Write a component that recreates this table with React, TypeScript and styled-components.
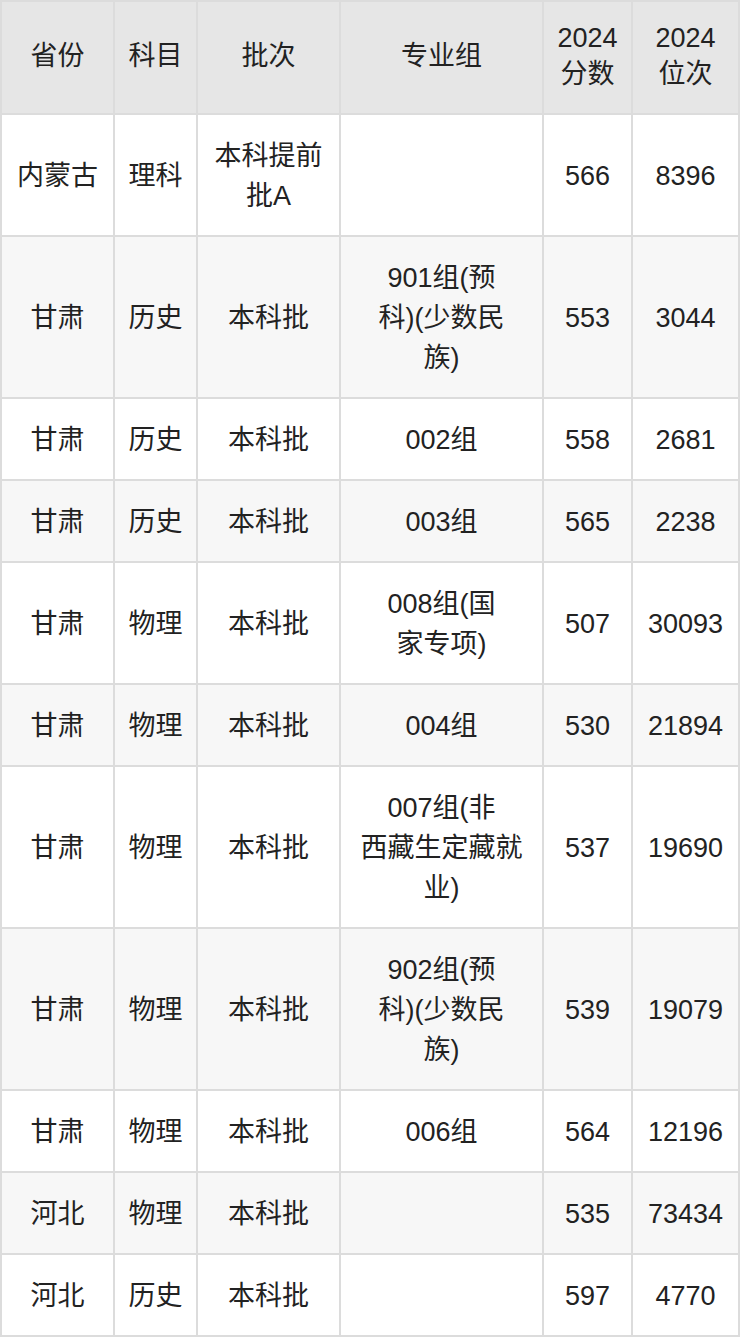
import React from "react";
import styled, { createGlobalStyle } from "styled-components";

const GlobalStyle = createGlobalStyle`
  html, body {
    margin: 0;
    padding: 0;
    background: #ffffff;
  }
  body {
    font-family: "Liberation Sans", "Noto Sans CJK SC", sans-serif;
    color: #222222;
  }
`;

const Table = styled.table`
  width: 740px;
  border-collapse: separate;
  border-spacing: 0;
  table-layout: fixed;
  border-top: 2px solid #dcdcdc;
  border-left: 2px solid #dcdcdc;
  font-size: 27px;
`;

const HeadCell = styled.th<{ $w: number }>`
  box-sizing: border-box;
  width: ${(p) => p.$w}px;
  background: #e6e6e6;
  font-weight: 400;
  line-height: 36px;
  padding: 18px 4px 21px;
  text-align: center;
  vertical-align: middle;
  border-right: 2px solid #dcdcdc;
  border-bottom: 2px solid #dcdcdc;
  white-space: pre-line;
`;

const Row = styled.tr<{ $striped: boolean }>`
  background: ${(p) => (p.$striped ? "#f7f7f7" : "#ffffff")};
`;

const Cell = styled.td`
  box-sizing: border-box;
  line-height: 40px;
  padding: 21px 4px 19px;
  text-align: center;
  vertical-align: middle;
  border-right: 2px solid #dcdcdc;
  border-bottom: 2px solid #dcdcdc;
  white-space: pre-line;
`;

const columns = [
  { label: "省份", w: 113 },
  { label: "科目", w: 83 },
  { label: "批次", w: 143 },
  { label: "专业组", w: 203 },
  { label: "2024\n分数", w: 89 },
  { label: "2024\n位次", w: 107 },
];

const rows: string[][] = [
  ["内蒙古", "理科", "本科提前\n批A", "", "566", "8396"],
  ["甘肃", "历史", "本科批", "901组(预\n科)(少数民\n族)", "553", "3044"],
  ["甘肃", "历史", "本科批", "002组", "558", "2681"],
  ["甘肃", "历史", "本科批", "003组", "565", "2238"],
  ["甘肃", "物理", "本科批", "008组(国\n家专项)", "507", "30093"],
  ["甘肃", "物理", "本科批", "004组", "530", "21894"],
  ["甘肃", "物理", "本科批", "007组(非\n西藏生定藏就\n业)", "537", "19690"],
  ["甘肃", "物理", "本科批", "902组(预\n科)(少数民\n族)", "539", "19079"],
  ["甘肃", "物理", "本科批", "006组", "564", "12196"],
  ["河北", "物理", "本科批", "", "535", "73434"],
  ["河北", "历史", "本科批", "", "597", "4770"],
];

export default function App() {
  return (
    <>
      <GlobalStyle />
      <Table>
        <thead>
          <tr>
            {columns.map((c) => (
              <HeadCell key={c.label} $w={c.w}>
                {c.label}
              </HeadCell>
            ))}
          </tr>
        </thead>
        <tbody>
          {rows.map((r, i) => (
            <Row key={i} $striped={i % 2 === 1}>
              {r.map((v, j) => (
                <Cell key={j}>{v}</Cell>
              ))}
            </Row>
          ))}
        </tbody>
      </Table>
    </>
  );
}
